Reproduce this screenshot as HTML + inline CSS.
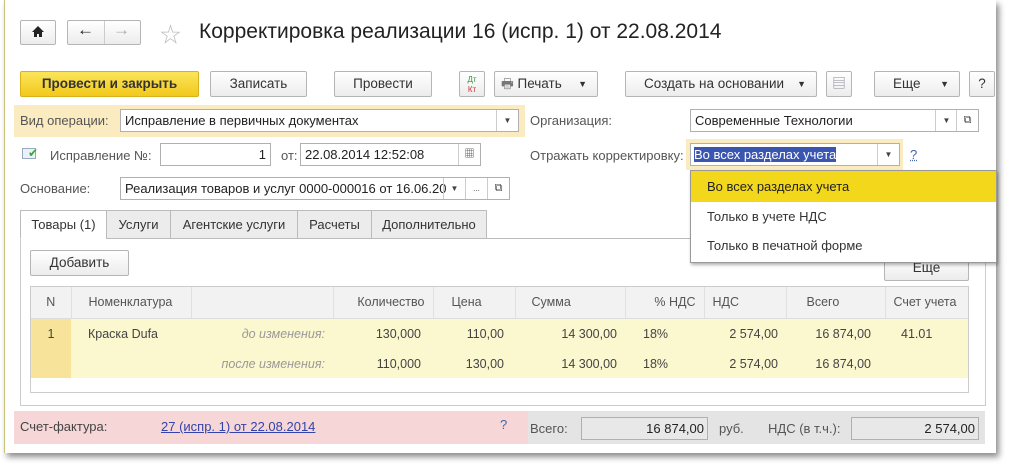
<!DOCTYPE html><html><head><meta charset="utf-8"><style>
*{box-sizing:border-box;margin:0;padding:0}
body{width:1012px;height:473px;background:#fff;font-family:"Liberation Sans","Noto Sans CJK SC",sans-serif;font-size:13px;color:#333;position:relative;overflow:hidden}
.a{position:absolute}
.win{left:4px;top:0;width:992px;height:453px;background:#fff;border-left:1px solid #c9c27a;box-shadow:3px 4px 6px rgba(0,0,0,.45)}
.btn{position:absolute;border:1px solid #b5b5b5;border-radius:2px;background:linear-gradient(#fff,#ececec);text-align:center;font-size:13.5px;color:#333;line-height:24px;height:26px}
.fld{position:absolute;border:1px solid #b0b0b0;background:#fff;height:23px;line-height:21px;padding-left:4px;font-size:13px;color:#222;white-space:nowrap;overflow:hidden}
.lbl{position:absolute;color:#555;font-size:13px}
.dd{position:absolute;border-left:1px solid #ccc;width:22px;height:21px;top:0;text-align:center;font-size:8px;line-height:21px;color:#444}
.tab{position:absolute;top:210px;height:29px;border:1px solid #bbb;background:#ececec;line-height:27px;text-align:center;font-size:13px;color:#333}
table{border-collapse:collapse;font-size:12.5px;color:#444;table-layout:fixed;width:939px}
td{height:30px;padding:0 8px;white-space:nowrap;overflow:hidden}
.h td{background:#f2f2f2;color:#555;border-right:1px solid #e0e0e0;border-bottom:1px solid #ddd;height:31px}
.r td{background:#fbf7cf;padding-top:2px}
.R{text-align:right}
</style></head><body>
<div class="a win"></div>
<div class="btn" style="left:20px;top:20px;width:36px;height:25px"></div>
<svg class="a" style="left:31px;top:25px" width="14" height="13" viewBox="0 0 14 13"><path d="M7 1L1 7h2v5h3V9h2v3h3V7h2z" fill="#222"/></svg>
<div class="btn" style="left:67px;top:20px;width:74px;height:25px"></div>
<div class="a" style="left:104px;top:21px;width:1px;height:23px;background:#ccc"></div>
<div class="a" style="left:77px;top:20px;font-size:17px;font-weight:bold;color:#222">&#8592;</div>
<div class="a" style="left:113px;top:20px;font-size:17px;color:#aaa">&#8594;</div>
<div class="a" style="left:160px;top:19px;font-size:21px;color:#bbb">&#9734;</div>
<div class="a" style="left:199px;top:20px;font-size:21px;color:#222">Корректировка реализации 16 (испр. 1) от 22.08.2014</div>

<div class="btn" style="left:20px;top:71px;width:179px;background:linear-gradient(#fbe55a,#f2c91c);border-color:#d8b21a;font-weight:bold;color:#333">Провести и закрыть</div>
<div class="btn" style="left:210px;top:71px;width:97px">Записать</div>
<div class="btn" style="left:334px;top:71px;width:98px">Провести</div>
<div class="btn" style="left:459px;top:71px;width:26px;font-size:8px;line-height:10px;padding-top:3px"><span style="color:#393">Дт</span><br><span style="color:#c33">Кт</span></div>
<div class="btn" style="left:494px;top:71px;width:104px;text-align:left;padding-left:6px"><span style="color:#777">🖶</span> Печать <span style="position:absolute;right:10px;font-size:9px">▼</span></div>
<div class="btn" style="left:625px;top:71px;width:192px;text-align:left;padding-left:18px">Создать на основании <span style="position:absolute;right:10px;font-size:9px">▼</span></div>
<div class="btn" style="left:826px;top:71px;width:26px;color:#889">▤</div>
<div class="btn" style="left:874px;top:71px;width:86px;text-align:left;padding-left:18px">Еще <span style="position:absolute;right:10px;font-size:9px">▼</span></div>
<div class="btn" style="left:969px;top:71px;width:26px">?</div>

<div class="a" style="left:14px;top:105px;width:511px;height:32px;background:#fbebc0"></div>
<div class="lbl" style="left:20px;top:113px">Вид операции:</div>
<div class="fld" style="left:120px;top:109px;width:399px">Исправление в первичных документах<div class="dd" style="right:0">▼</div></div>
<div class="lbl" style="left:530px;top:113px">Организация:</div>
<div class="fld" style="left:690px;top:109px;width:289px">Современные Технологии<div class="dd" style="right:21px">▼</div><div class="dd" style="right:0;font-size:11px">⧉</div></div>

<div class="a" style="left:22px;top:148px;width:14px;height:11px;border:1px solid #9ab;background:#eef"></div>
<div class="a" style="left:28px;top:146px;color:#3a3;font-size:12px">✔</div>
<div class="lbl" style="left:50px;top:148px">Исправление №:</div>
<div class="fld" style="left:160px;top:143px;width:111px;text-align:right;padding-right:4px">1</div>
<div class="lbl" style="left:281px;top:148px">от:</div>
<div class="fld" style="left:300px;top:143px;width:181px">22.08.2014 12:52:08<div class="dd" style="right:0;font-size:10px">▦</div></div>
<div class="lbl" style="left:530px;top:148px">Отражать корректировку:</div>
<div class="a" style="left:686px;top:139px;width:217px;height:31px;background:#fbebc0"></div>
<div class="fld" style="left:690px;top:143px;width:210px;padding-left:3px"><span style="background:#3a56b0;color:#fff">Во всех разделах учета</span><div class="dd" style="right:0">▼</div></div>
<div class="a" style="left:910px;top:147px;color:#46a;text-decoration:underline dotted">?</div>

<div class="lbl" style="left:20px;top:181px">Основание:</div>
<div class="fld" style="left:120px;top:177px;width:390px">Реализация товаров и услуг 0000-000016 от 16.06.20<div class="dd" style="right:44px">▼</div><div class="dd" style="right:22px">...</div><div class="dd" style="right:0;font-size:11px">⧉</div></div>

<div class="a" style="left:20px;top:238px;width:966px;height:168px;border:1px solid #ccc;border-top:1px solid #bbb"></div>
<div class="tab" style="left:20px;width:87px;background:#fff;border-bottom-color:#fff">Товары (1)</div>
<div class="tab" style="left:106px;width:65px">Услуги</div>
<div class="tab" style="left:170px;width:128px">Агентские услуги</div>
<div class="tab" style="left:297px;width:75px">Расчеты</div>
<div class="tab" style="left:371px;width:116px">Дополнительно</div>

<div class="btn" style="left:30px;top:250px;width:99px">Добавить</div>
<div class="btn" style="left:884px;top:255px;width:85px">Еще</div>

<div class="a" style="left:30px;top:286px;width:939px;height:107px;border:1px solid #ccc;overflow:hidden">
<table>
<colgroup><col style="width:40px"><col style="width:120px"><col style="width:142px"><col style="width:100px"><col style="width:82px"><col style="width:110px"><col style="width:79px"><col style="width:82px"><col style="width:99px"><col style="width:85px"></colgroup>
<tr class="h"><td style="text-align:center">N</td><td style="padding-left:17px">Номенклатура</td><td></td><td class="R">Количество</td><td style="padding-left:18px">Цена</td><td style="padding-left:16px">Сумма</td><td class="R">% НДС</td><td>НДС</td><td style="padding-left:20px">Всего</td><td>Счет учета</td></tr>
<tr class="r"><td style="background:#f7e49a;text-align:center">1</td><td style="padding-left:17px">Краска Dufa</td><td class="R" style="font-style:italic;color:#999">до изменения:</td><td class="R" style="padding-right:12px">130,000</td><td class="R" style="padding-right:11px">110,00</td><td class="R">14 300,00</td><td style="padding-left:18px">18%</td><td class="R">2 574,00</td><td class="R" style="padding-right:14px">16 874,00</td><td style="padding-left:16px">41.01</td></tr>
<tr class="r"><td style="background:#f7e49a"></td><td></td><td class="R" style="font-style:italic;color:#999">после изменения:</td><td class="R" style="padding-right:12px">110,000</td><td class="R" style="padding-right:11px">130,00</td><td class="R">14 300,00</td><td style="padding-left:18px">18%</td><td class="R">2 574,00</td><td class="R" style="padding-right:14px">16 874,00</td><td></td></tr>
</table></div>

<div class="a" style="left:690px;top:170px;width:307px;height:93px;background:#fff;border:1px solid #999;box-shadow:1px 2px 3px rgba(0,0,0,.3)">
<div style="height:31px;background:#f3d71a;line-height:31px;padding-left:16px;color:#222">Во всех разделах учета</div>
<div style="height:29px;line-height:29px;padding-left:16px">Только в учете НДС</div>
<div style="height:29px;line-height:29px;padding-left:16px">Только в печатной форме</div>
</div>

<div class="a" style="left:14px;top:411px;width:514px;height:33px;background:#f6d6d6"></div>
<div class="a" style="left:528px;top:411px;width:457px;height:33px;background:#e4e4e4"></div>
<div class="lbl" style="left:20px;top:419px;color:#444">Счет-фактура:</div>
<div class="a" style="left:161px;top:419px;color:#34a;text-decoration:underline">27 (испр. 1) от 22.08.2014</div>
<div class="a" style="left:500px;top:417px;color:#46a">?</div>
<div class="lbl" style="left:530px;top:421px">Всего:</div>
<div class="fld" style="left:581px;top:417px;width:127px;background:#e8e8e8;text-align:right;padding-right:3px">16 874,00</div>
<div class="lbl" style="left:719px;top:421px">руб.</div>
<div class="lbl" style="left:768px;top:421px">НДС (в т.ч.):</div>
<div class="fld" style="left:851px;top:417px;width:128px;background:#e8e8e8;text-align:right;padding-right:3px">2 574,00</div>
</body></html>
